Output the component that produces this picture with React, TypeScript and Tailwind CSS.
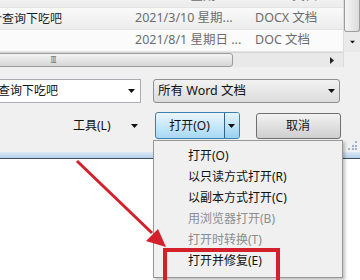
const FONT = "font-['Noto_Sans','Noto_Sans_CJK_SC',sans-serif]";

function Caret({ className = "" }: { className?: string }) {
  return (
    <svg viewBox="0 0 7 4" className={`h-[4px] w-[7px] ${className}`}>
      <path d="M0 0H7L3.5 4Z" fill="#111" />
    </svg>
  );
}

function Row({ name, date, type, shade }: { name: string; date: string; type: string; shade?: boolean }) {
  return (
    <div
      className={`flex h-[22px] shrink-0 items-center border-b border-[#e3e3e3] ${
        shade ? "bg-gradient-to-b from-[#fafafa] to-[#ececec]" : "bg-[#fbfbfb]"
      }`}
    >
      <div className="w-[135px] shrink-0 overflow-hidden whitespace-nowrap">
        <span className="-ml-[10px] block text-[#1e1e1e]">{name}</span>
      </div>
      <div className="w-[120px] shrink-0 whitespace-nowrap text-[12.5px] text-[#6d6d6d]">{date}</div>
      <div className="whitespace-nowrap text-[12.5px] text-[#6d6d6d]">{type}</div>
    </div>
  );
}

const ITEMS: { label: string; disabled?: boolean }[] = [
  { label: "打开(O)" },
  { label: "以只读方式打开(R)" },
  { label: "以副本方式打开(C)" },
  { label: "用浏览器打开(B)", disabled: true },
  { label: "打开时转换(T)", disabled: true },
  { label: "打开并修复(E)" },
];

export default function App() {
  return (
    <div className={`relative h-[280px] w-[360px] overflow-hidden bg-white text-[12px] leading-none ${FONT}`}>
      {/* file list */}
      <div className="flex h-[67px]">
        <div className="flex w-[343px] flex-col">
          <div className="h-[52px] overflow-hidden">
            <div className="-mt-[14px] flex flex-col">
              <Row name="" date="2021/3/9 星期三 ..." type="DOCX 文档" shade />
              <Row name="个查询下吃吧" date="2021/3/10 星期..." type="DOCX 文档" shade />
              <Row name="" date="2021/8/1 星期日 ..." type="DOC 文档" />
            </div>
          </div>
          <div className="flex h-[15px] items-center overflow-hidden border-t border-[#d6d6d6] bg-[#e9e9e9]">
            <div className="-ml-[127px] flex h-[14px] w-[360px] shrink-0 items-center justify-center rounded-[3px] border border-[#9c9c9c] bg-gradient-to-b from-[#f4f4f4] to-[#d6d6d6]">
              <span className="text-[8px] tracking-[-1px] text-[#7a7a7a]">III</span>
            </div>
            <div className="ml-auto mr-[9px]">
              <svg viewBox="0 0 4 7" className="h-[7px] w-[4px]">
                <path d="M0 0V7L4 3.5Z" fill="#222" />
              </svg>
            </div>
          </div>
        </div>
        <div className="flex w-[17px] flex-col border-l border-[#dcdcdc] bg-[#eaeaea]">
          <div className="h-[32px] rounded-b-[3px] border border-t-0 border-[#9c9c9c] bg-gradient-to-r from-[#f5f5f5] to-[#dcdcdc]" />
          <div className="flex h-[20px] items-center justify-center">
            <Caret className="scale-75" />
          </div>
          <div className="h-[15px] bg-[#f0f0f0]" />
        </div>
      </div>

      {/* dialog footer */}
      <div className="relative flex h-[85px] flex-col gap-[9px] bg-[#f0f0f0] pt-[12px]">
        <div className="flex items-center">
          <div className="flex h-[24px] w-[141px] items-center overflow-hidden border border-l-0 border-[#abadb3] bg-white pr-[5px]">
            <span className="-ml-[2px] text-[#111]">查询下吃吧</span>
            <Caret className="ml-auto" />
          </div>
          <div className="ml-[12px] flex h-[24px] w-[187px] items-center rounded-[3px] border border-[#8e8f8f] bg-gradient-to-b from-[#f2f2f2] to-[#dcdcdc] pl-[4px] pr-[4px]">
            <span className="text-[12.5px] text-[#111]">所有 Word 文档</span>
            <Caret className="ml-auto" />
          </div>
        </div>
        <div className="flex items-center">
          <span className="ml-[73px] text-[#111]">工具(L)</span>
          <Caret className="ml-[20px]" />
          <div className="ml-[17px] flex h-[27px] w-[85px] overflow-hidden rounded-[3px] border border-[#3c7fb1] bg-gradient-to-b from-[#eaf6fd] to-[#a7d9f5]">
            <div className="flex flex-1 items-center justify-center text-[#111]">打开(O)</div>
            <div className="flex w-[15px] items-center justify-center border-l border-[#2c628b] bg-gradient-to-b from-[#e5f4fc] to-[#98d1ef]">
              <Caret />
            </div>
          </div>
          <div className="ml-[16px] flex h-[26px] w-[85px] items-center justify-center rounded-[3px] border border-[#707070] bg-gradient-to-b from-[#f2f2f2] to-[#cfcfcf] text-[#111]">
            取消
          </div>
        </div>
        {/* size grip */}
        <div className="absolute bottom-[1px] right-[2px] grid h-[10px] w-[10px] grid-cols-3 gap-[1px]">
          <span />
          <span />
          <span className="h-[2px] w-[2px] bg-[#9fb4c8]" />
          <span />
          <span className="h-[2px] w-[2px] bg-[#9fb4c8]" />
          <span className="h-[2px] w-[2px] bg-[#9fb4c8]" />
          <span className="h-[2px] w-[2px] bg-[#9fb4c8]" />
          <span className="h-[2px] w-[2px] bg-[#9fb4c8]" />
          <span className="h-[2px] w-[2px] bg-[#9fb4c8]" />
        </div>
      </div>

      {/* window frame bottom */}
      <div className="h-[7px] border-b border-[#3f4f60] bg-gradient-to-b from-[#dbe8f5] to-[#b6cfe8]" />

      {/* drop-down menu */}
      <div className="absolute left-[153px] top-[140px] flex w-[190px] flex-col border border-[#979797] bg-[#f0f0f0] pt-[4px] pb-[6px] shadow-[2px_2px_3px_rgba(0,0,0,0.25)]">
        {ITEMS.map((it) => (
          <div
            key={it.label}
            className={`flex h-[21px] items-center pl-[34px] ${it.disabled ? "text-[#8d8d8d]" : "text-[#111]"}`}
          >
            {it.label}
          </div>
        ))}
      </div>

      {/* annotation */}
      <div className="absolute left-[163px] top-[248px] h-[40px] w-[117px] border-[4px] border-[#d4202b]" />
      <svg className="pointer-events-none absolute left-0 top-0 h-[280px] w-[360px]" viewBox="0 0 360 280">
        <line x1="77" y1="161" x2="152" y2="233" stroke="#d4202b" strokeWidth="3" />
        <path d="M166 247 L146 241 L158 229 Z" fill="#d4202b" />
      </svg>
    </div>
  );
}
